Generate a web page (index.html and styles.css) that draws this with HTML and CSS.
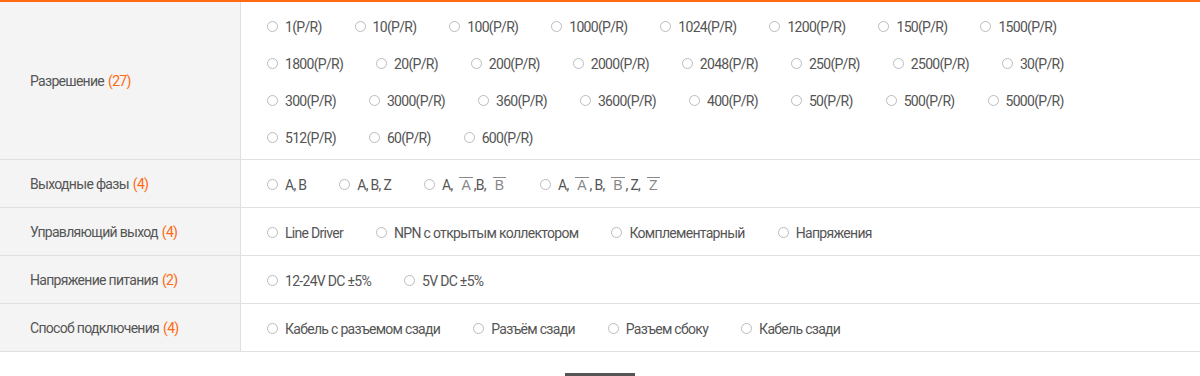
FILE: index.html
```html
<!DOCTYPE html>
<html lang="ru">
<head>
  <meta charset="UTF-8" />
  <title>Фильтр</title>
  <link rel="stylesheet" href="styles.css">
</head>
<body>

  <div class="filter-table">

    <!-- Разрешение -->
    <div class="filter-row">
      <div class="filter-name">Разрешение <span class="count">(27)</span></div>
      <div class="filter-options filter-options--long">
        <label class="opt"><input type="radio" name="res"><span>1(P/R)</span></label>
        <label class="opt"><input type="radio" name="res"><span>10(P/R)</span></label>
        <label class="opt"><input type="radio" name="res"><span>100(P/R)</span></label>
        <label class="opt"><input type="radio" name="res"><span>1000(P/R)</span></label>
        <label class="opt"><input type="radio" name="res"><span>1024(P/R)</span></label>
        <label class="opt"><input type="radio" name="res"><span>1200(P/R)</span></label>
        <label class="opt"><input type="radio" name="res"><span>150(P/R)</span></label>
        <label class="opt"><input type="radio" name="res"><span>1500(P/R)</span></label>
        <label class="opt"><input type="radio" name="res"><span>1800(P/R)</span></label>
        <label class="opt"><input type="radio" name="res"><span>20(P/R)</span></label>
        <label class="opt"><input type="radio" name="res"><span>200(P/R)</span></label>
        <label class="opt"><input type="radio" name="res"><span>2000(P/R)</span></label>
        <label class="opt"><input type="radio" name="res"><span>2048(P/R)</span></label>
        <label class="opt"><input type="radio" name="res"><span>250(P/R)</span></label>
        <label class="opt"><input type="radio" name="res"><span>2500(P/R)</span></label>
        <label class="opt"><input type="radio" name="res"><span>30(P/R)</span></label>
        <label class="opt"><input type="radio" name="res"><span>300(P/R)</span></label>
        <label class="opt"><input type="radio" name="res"><span>3000(P/R)</span></label>
        <label class="opt"><input type="radio" name="res"><span>360(P/R)</span></label>
        <label class="opt"><input type="radio" name="res"><span>3600(P/R)</span></label>
        <label class="opt"><input type="radio" name="res"><span>400(P/R)</span></label>
        <label class="opt"><input type="radio" name="res"><span>50(P/R)</span></label>
        <label class="opt"><input type="radio" name="res"><span>500(P/R)</span></label>
        <label class="opt"><input type="radio" name="res"><span>5000(P/R)</span></label>
        <label class="opt"><input type="radio" name="res"><span>512(P/R)</span></label>
        <label class="opt"><input type="radio" name="res"><span>60(P/R)</span></label>
        <label class="opt"><input type="radio" name="res"><span>600(P/R)</span></label>
      </div>
    </div>

    <!-- Выходные фазы -->
    <div class="filter-row">
      <div class="filter-name">Выходные фазы <span class="count">(4)</span></div>
      <div class="filter-options">
        <label class="opt"><input type="radio" name="phase"><span>A, B</span></label>
        <label class="opt"><input type="radio" name="phase"><span>A, B, Z</span></label>
        <label class="opt"><input type="radio" name="phase"><span>A, <span class="bar">A</span>,B, <span class="bar">B</span></span></label>
        <label class="opt"><input type="radio" name="phase"><span>A, <span class="bar">A</span>, B, <span class="bar">B</span>, Z, <span class="bar">Z</span></span></label>
      </div>
    </div>

    <!-- Управляющий выход -->
    <div class="filter-row">
      <div class="filter-name">Управляющий выход <span class="count">(4)</span></div>
      <div class="filter-options">
        <label class="opt"><input type="radio" name="out"><span>Line Driver</span></label>
        <label class="opt"><input type="radio" name="out"><span>NPN с открытым коллектором</span></label>
        <label class="opt"><input type="radio" name="out"><span>Комплементарный</span></label>
        <label class="opt"><input type="radio" name="out"><span>Напряжения</span></label>
      </div>
    </div>

    <!-- Напряжение питания -->
    <div class="filter-row">
      <div class="filter-name">Напряжение питания <span class="count">(2)</span></div>
      <div class="filter-options">
        <label class="opt"><input type="radio" name="volt"><span>12-24V DC ±5%</span></label>
        <label class="opt"><input type="radio" name="volt"><span>5V DC ±5%</span></label>
      </div>
    </div>

    <!-- Способ подключения -->
    <div class="filter-row">
      <div class="filter-name">Способ подключения <span class="count">(4)</span></div>
      <div class="filter-options">
        <label class="opt"><input type="radio" name="conn"><span>Кабель с разъемом сзади</span></label>
        <label class="opt"><input type="radio" name="conn"><span>Разъём сзади</span></label>
        <label class="opt"><input type="radio" name="conn"><span>Разъем сбоку</span></label>
        <label class="opt"><input type="radio" name="conn"><span>Кабель сзади</span></label>
      </div>
    </div>

  </div>

  <div class="more">
    <button class="more-btn">Ещё</button>
  </div>

</body>
</html>
```

FILE: styles.css
```css
:root {
  --accent: #ff6a13;
  --line: #e0e0e0;
  --text: #555;
}

body {
  margin: 0;
  font-family: Roboto, "Noto Sans", sans-serif;
  font-size: 14px;
  letter-spacing: -0.7px;
  color: var(--text);
  background: white;
  overflow: hidden;
}

.filter-table {
  border-top: 2px solid var(--accent);
}

.filter-row {
  display: flex;
  border-bottom: 1px solid var(--line);
}

.filter-name {
  width: 210px;
  flex-shrink: 0;
  padding-left: 30px;
  background: #f4f4f4;
  border-right: 1px solid var(--line);
  display: flex;
  align-items: center;
}

.count {
  color: var(--accent);
  margin-left: 4px;
}

.filter-options {
  flex: 1;
  padding: 6px 70px 4px 26px;
  display: flex;
  flex-wrap: wrap;
}

.filter-options--long {
  padding-bottom: 3px;
}

.opt {
  display: flex;
  align-items: center;
  height: 37px;
  margin-right: 33px;
  white-space: nowrap;
}

.opt input {
  appearance: none;
  box-sizing: border-box;
  width: 11px;
  height: 11px;
  margin: 0 7px 0 0;
  border: 1px solid #bbb;
  border-radius: 50%;
  background: white;
}

/* inverted signals: letter with a bar over it */
.bar {
  display: inline-block;
  font-family: "Liberation Sans", Arial, sans-serif;
  letter-spacing: 0;
  color: #888;
  border-top: 1px solid #888;
  line-height: 12px;
  padding: 1px 2px 0;
  margin: 0 1px 0 4px;
}

.more {
  display: flex;
  justify-content: center;
  padding-top: 21px;
}

.more-btn {
  width: 70px;
  height: 34px;
  border: none;
  background: #555;
  color: white;
}
```
